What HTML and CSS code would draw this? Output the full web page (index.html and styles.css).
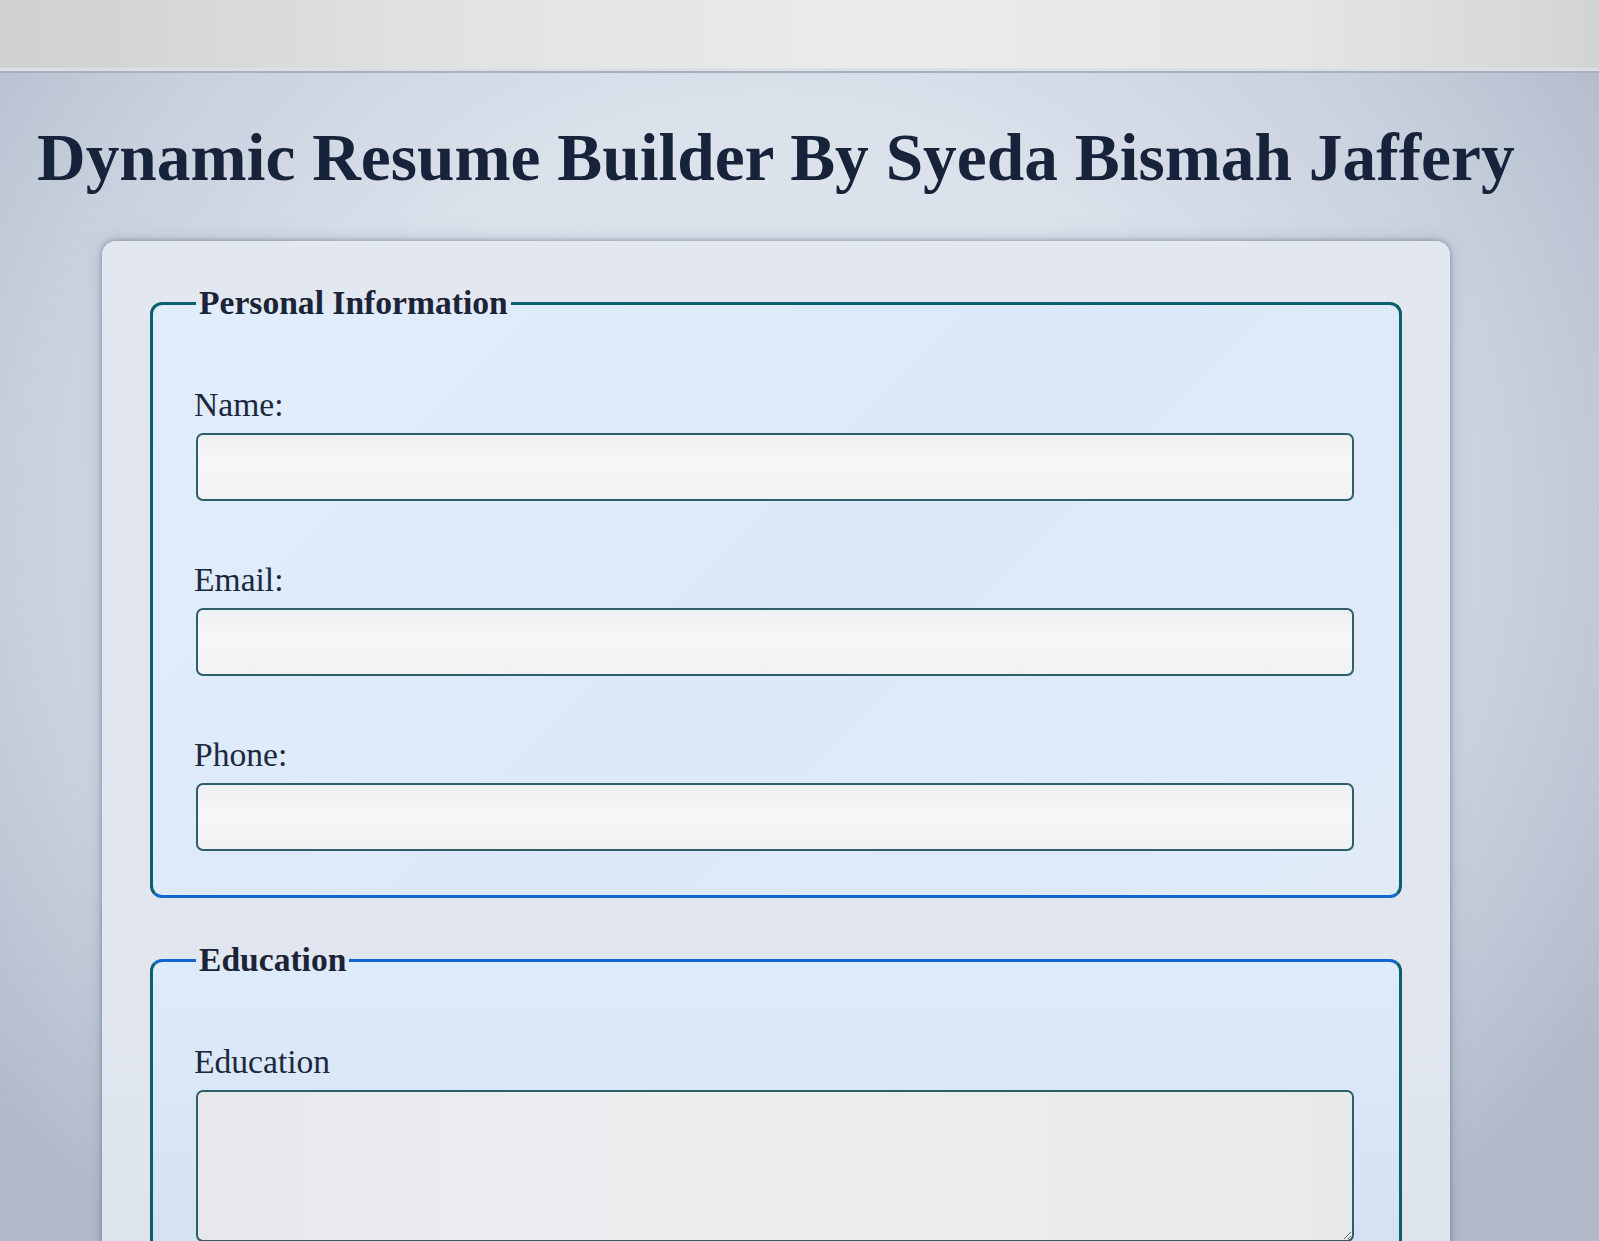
FILE: index.html
```html
<!DOCTYPE html>
<html lang="en">
<head>
<meta charset="utf-8">
<title>Dynamic Resume Builder</title>
<link rel="stylesheet" href="styles.css">
</head>
<body>
  <div class="topbar"></div>
  <main class="page">
    <h1 class="title">Dynamic Resume Builder By Syeda Bismah Jaffery</h1>
    <form class="card">
      <fieldset class="group group-personal">
        <legend class="group-title">Personal Information</legend>
        <div class="fields">
          <div class="field">
            <label class="field-label" for="name">Name:</label>
            <input class="field-input" id="name" type="text">
          </div>
          <div class="field">
            <label class="field-label" for="email">Email:</label>
            <input class="field-input" id="email" type="email">
          </div>
          <div class="field">
            <label class="field-label" for="phone">Phone:</label>
            <input class="field-input" id="phone" type="tel">
          </div>
        </div>
      </fieldset>
      <fieldset class="group group-education">
        <legend class="group-title">Education</legend>
        <div class="fields">
          <div class="field">
            <label class="field-label" for="education">Education</label>
            <textarea class="field-input field-area" id="education"></textarea>
          </div>
        </div>
      </fieldset>
    </form>
  </main>
</body>
</html>
```

FILE: styles.css
```css
html, body {
  margin: 0;
  padding: 0;
  height: 100%;
  overflow: hidden;
}

body {
  font-family: "Liberation Serif", "Times New Roman", serif;
  color: #1b2a41;
  background:
    radial-gradient(ellipse 62% 75% at 48% 42%, #e4e9f2 0%, #dbe1eb 45%, #c9d1de 75%, #b0bac9 100%);
}

.topbar {
  height: 68px;
  background: linear-gradient(90deg, #cfd0d2 0%, #e2e3e4 30%, #ebebec 55%, #e6e6e7 80%, #d3d4d6 100%);
  border-bottom: 3px solid #dde0e2;
  box-shadow: 0 2px 0 #a9b0bc;
}

.page {
  padding-top: 50px;
}

.title {
  margin: 0 0 0 37px;
  font-size: 67.4px;
  font-weight: bold;
  line-height: 74px;
  color: #17233a;
  white-space: nowrap;
}

.card {
  margin: 46px 0 0 102px;
  width: 1348px;
  box-sizing: border-box;
  padding: 43px 48px 60px;
  background: linear-gradient(180deg, #e3e7ef 0%, #e1e6ef 60%, #dde3ed 100%);
  border-radius: 14px;
  box-shadow: 0 0 5px rgba(70, 82, 105, 0.55), 0 0 18px rgba(120, 132, 155, 0.35);
}

.group {
  margin: 0;
  padding: 63px 45px 44px 43px;
  border: 3px solid #0b5f6c;
  border-radius: 12px;
  background: linear-gradient(135deg, #e1edfb 0%, #dce9fa 50%, #e1ebf8 100%);
  min-width: 0;
}

.group-personal {
  border-bottom-color: #1167cf;
}

.group-education {
  margin-top: 43px;
  border-top-color: #1167cf;
  background: linear-gradient(180deg, #deebfb 0%, #d3e0f1 100%);
}

.group-title {
  padding: 0 3px;
  font-size: 33.6px;
  font-weight: bold;
  line-height: 38px;
  color: #1b2336;
}

.fields {
  display: flex;
  flex-direction: column;
  gap: 59px;
}

.field {
  display: flex;
  flex-direction: column;
  align-items: stretch;
  gap: 9px;
}

.field-label {
  margin-left: -2px;
  font-size: 33.6px;
  line-height: 39px;
  color: #1d2840;
}

.field-input {
  display: block;
  box-sizing: border-box;
  width: 100%;
  height: 68px;
  margin: 0;
  border: 2px solid #2e5e68;
  border-radius: 7px;
  background: linear-gradient(180deg, #eef1f3 0%, #f5f6f7 45%, #f1f2f4 100%);
  font-family: "Liberation Serif", "Times New Roman", serif;
  font-size: 28px;
}

.field-area {
  height: 152px;
  resize: vertical;
  background: linear-gradient(90deg, #e6e8eb 0%, #eceef0 40%, #e8e9eb 100%);
}
```
